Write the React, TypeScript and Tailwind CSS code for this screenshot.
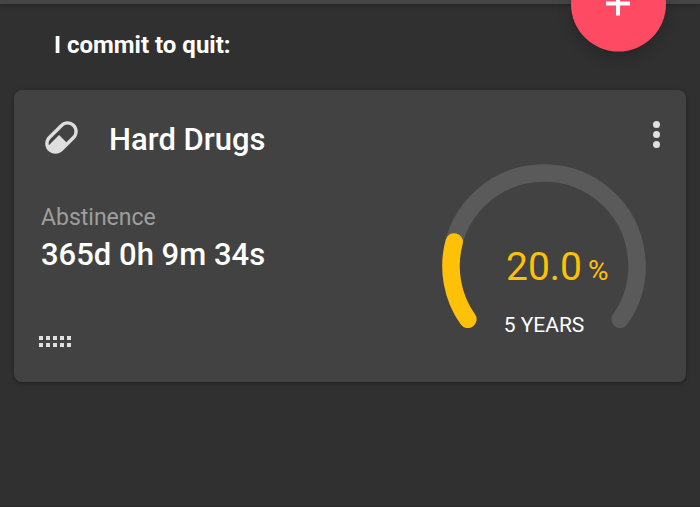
interface GaugeProps {
  percent: number
  label: string
}

const SWEEP = 250
const START = 145
const RADIUS = 93

function pointAt(angle: number) {
  const rad = (angle * Math.PI) / 180
  return `${102 + RADIUS * Math.cos(rad)} ${102 + RADIUS * Math.sin(rad)}`
}

function arcPath(sweep: number) {
  const large = sweep > 180 ? 1 : 0
  return `M${pointAt(START)}A${RADIUS} ${RADIUS} 0 ${large} 1 ${pointAt(START + sweep)}`
}

function Gauge({ percent, label }: GaugeProps) {
  return (
    <div className="relative w-51 shrink-0">
      <svg
        viewBox="0 0 204 166"
        className="block w-full"
        fill="none"
        strokeWidth="17.5"
        strokeLinecap="round"
        aria-hidden="true"
      >
        <path d={arcPath(SWEEP)} stroke="#5a5a5a" />
        <path d={arcPath((SWEEP * percent) / 100)} stroke="#ffc107" />
      </svg>
      <div className="absolute inset-x-0 top-[79px] flex flex-col">
        <div className="flex items-baseline gap-1.5 pl-16 text-[#ffc107]">
          <span className="text-[39px] leading-12">{percent.toFixed(1)}</span>
          <span className="text-[28px] leading-12">%</span>
        </div>
        <div className="mt-4 text-center text-[21px] leading-7 text-white">
          {label}
        </div>
      </div>
    </div>
  )
}

function PillIcon() {
  return (
    <svg
      viewBox="0 0 24 24"
      className="size-[41px]"
      fill="#dedede"
      aria-hidden="true"
    >
      <path d="M4.22,11.29L11.29,4.22C13.64,1.88 17.43,1.88 19.78,4.22C22.12,6.56 22.12,10.36 19.78,12.71L12.71,19.78C10.36,22.12 6.56,22.12 4.22,19.78C1.88,17.43 1.88,13.64 4.22,11.29M5.64,12.71C4.59,13.75 4.24,15.24 4.6,16.57L10.59,10.59L14.83,14.83L18.36,11.29C19.93,9.73 19.93,7.2 18.36,5.64C16.8,4.07 14.27,4.07 12.71,5.64L5.64,12.71Z" />
    </svg>
  )
}

function DragHandle() {
  return (
    <button
      type="button"
      aria-label="Reorder"
      className="grid w-8 grid-cols-5 gap-[3px]"
    >
      {Array.from({ length: 10 }, (_, i) => (
        <span key={i} className="size-1 bg-[#e0e0e0]" />
      ))}
    </button>
  )
}

function AddictionCard() {
  return (
    <article className="mx-3.5 rounded-lg bg-[#424242] pb-[35px] pl-[25px] shadow-[0_1px_4px_rgba(0,0,0,0.35)]">
      <header className="flex h-[74px] items-start pt-[27px] pr-6 pl-0.5">
        <PillIcon />
        <h2 className="ml-[27px] grow text-[31px] leading-[46px] font-medium text-white">
          Hard Drugs
        </h2>
        <button
          type="button"
          aria-label="More options"
          className="mt-1 flex w-3 flex-col items-center gap-[3px]"
        >
          <span className="size-[7px] rounded-full bg-[#e0e0e0]" />
          <span className="size-[7px] rounded-full bg-[#e0e0e0]" />
          <span className="size-[7px] rounded-full bg-[#e0e0e0]" />
        </button>
      </header>
      <div className="flex items-start justify-between pr-10">
        <div className="pt-[38px]">
          <div className="pl-0.5">
            <p className="text-[23px] leading-8 text-[#9e9e9e]">Abstinence</p>
            <p className="text-[31px] leading-[42px] font-medium text-white">
              365d 0h 9m 34s
            </p>
          </div>
          <div className="mt-[60px]">
            <DragHandle />
          </div>
        </div>
        <Gauge percent={20} label="5 YEARS" />
      </div>
    </article>
  )
}

export default function App() {
  return (
    <div className="min-h-screen overflow-hidden border-b border-[#282828] bg-[#303030] font-['Roboto',sans-serif]">
      <div className="relative h-1 bg-[#454545] shadow-[0_1px_4px_rgba(0,0,0,0.3)]">
        <button
          type="button"
          aria-label="Add"
          className="absolute right-[34px] bottom-0 flex size-[95px] translate-y-1/2 items-center justify-center rounded-full bg-[#ff4a64] shadow-[0_6px_14px_rgba(0,0,0,0.2)]"
        >
          <svg viewBox="0 0 25 25" className="size-[25px]" aria-hidden="true">
            <path d="M12 0V24M0 12H24" stroke="#fff" strokeWidth="4" />
          </svg>
        </button>
      </div>
      <h1 className="pt-[25px] pb-[29px] pl-[54px] text-2xl font-bold text-white">
        I commit to quit:
      </h1>
      <AddictionCard />
    </div>
  )
}
